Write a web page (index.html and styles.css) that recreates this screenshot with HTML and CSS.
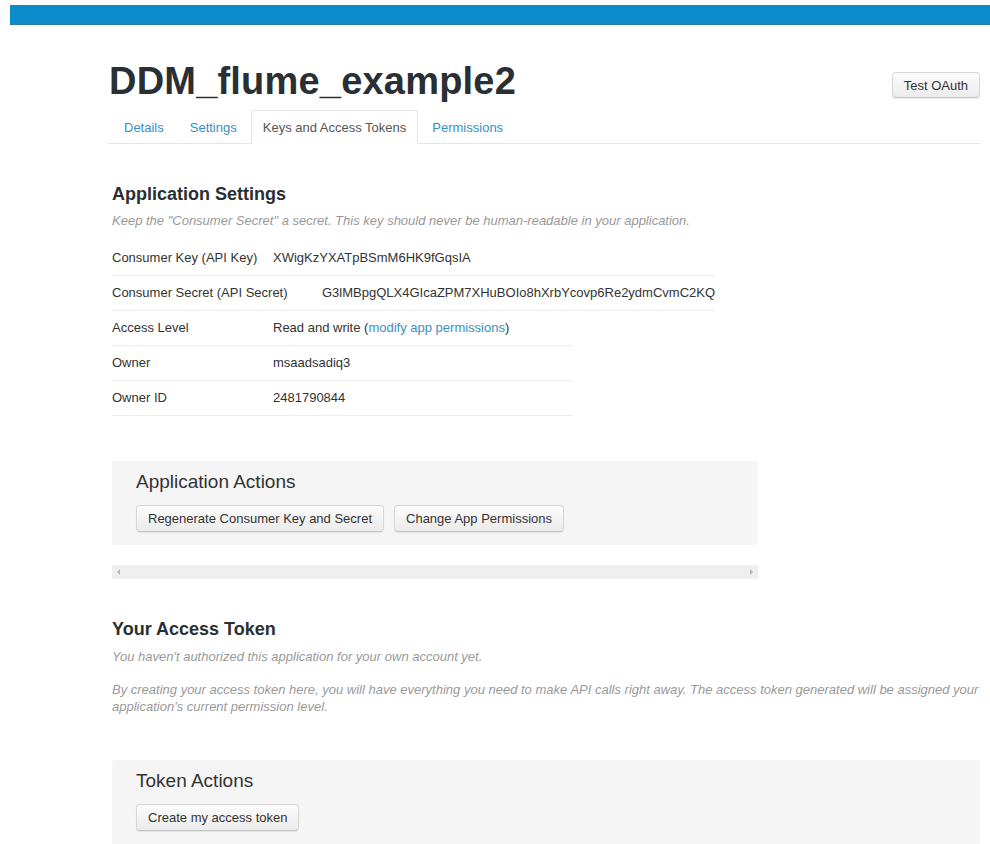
FILE: index.html
```html
<!DOCTYPE html>
<html lang="en">
<head>
<meta charset="utf-8">
<title>DDM_flume_example2 - Keys and Access Tokens</title>
<link rel="stylesheet" href="styles.css">
</head>
<body>
<div class="topbar"></div>
<div class="page">
  <header class="app-header">
    <div class="titlebar">
      <h1 class="app-title">DDM_flume_example2</h1>
      <button class="btn btn-test">Test OAuth</button>
    </div>
    <nav class="tabs">
      <a class="tab" href="#">Details</a>
      <a class="tab" href="#">Settings</a>
      <a class="tab active" href="#">Keys and Access Tokens</a>
      <a class="tab" href="#">Permissions</a>
    </nav>
  </header>

  <main class="content">
    <section class="settings">
      <h2 class="section-title">Application Settings</h2>
      <p class="note">Keep the "Consumer Secret" a secret. This key should never be human-readable in your application.</p>
      <div class="rows">
        <div class="row row-wide">
          <span class="label">Consumer Key (API Key)</span>
          <span class="value">XWigKzYXATpBSmM6HK9fGqsIA</span>
        </div>
        <div class="row row-wide">
          <span class="label label-long">Consumer Secret (API Secret)</span>
          <span class="value">G3lMBpgQLX4GIcaZPM7XHuBOIo8hXrbYcovp6Re2ydmCvmC2KQ</span>
        </div>
        <div class="row">
          <span class="label">Access Level</span>
          <span class="value">Read and write (<a class="link" href="#">modify app permissions</a>)</span>
        </div>
        <div class="row">
          <span class="label">Owner</span>
          <span class="value">msaadsadiq3</span>
        </div>
        <div class="row">
          <span class="label">Owner ID</span>
          <span class="value">2481790844</span>
        </div>
      </div>
    </section>

    <div class="action-box app-actions">
      <h3 class="box-title">Application Actions</h3>
      <div class="btn-row">
        <button class="btn">Regenerate Consumer Key and Secret</button>
        <button class="btn">Change App Permissions</button>
      </div>
    </div>

    <div class="hscroll">
      <span class="arrow arrow-left"></span>
      <span class="arrow arrow-right"></span>
    </div>

    <section class="token">
      <h2 class="section-title">Your Access Token</h2>
      <p class="note">You haven't authorized this application for your own account yet.</p>
      <p class="note para">By creating your access token here, you will have everything you need to make API calls right away. The access token generated will be assigned your application's current permission level.</p>
    </section>

    <div class="action-box token-actions">
      <h3 class="box-title">Token Actions</h3>
      <div class="btn-row">
        <button class="btn">Create my access token</button>
      </div>
    </div>
  </main>
</div>
</body>
</html>
```

FILE: styles.css
```css
* { box-sizing: border-box; }

html, body {
  margin: 0;
  padding: 0;
  background: #fff;
}

body {
  font-family: "Liberation Sans", Arial, sans-serif;
  font-size: 13px;
  color: #333;
  overflow: hidden;
}

.topbar {
  margin: 5px 0 0 10px;
  height: 20px;
  background: #0b8bc9;
  border-bottom: 1px solid #2a7c9e;
}

.page {
  padding: 0 10px 0 108px;
}

/* header */
.titlebar {
  display: flex;
  justify-content: space-between;
  align-items: flex-end;
  margin-top: 34px;
}

.app-title {
  margin: 0;
  padding-left: 1px;
  font-family: "Liberation Sans", Arial, sans-serif;
  font-size: 38px;
  line-height: 44px;
  font-weight: 700;
  color: #292f33;
  letter-spacing: 0.2px;
}

.btn {
  font-family: "Liberation Sans", Arial, sans-serif;
  font-size: 13px;
  color: #333;
  height: 27px;
  padding: 0 11px;
  background: linear-gradient(#fcfcfc, #ebebeb);
  border: 1px solid #d6d6d6;
  border-bottom-color: #c4c4c4;
  border-radius: 4px;
  box-shadow: 0 1px 1px rgba(0, 0, 0, 0.08);
  cursor: pointer;
}

.btn-test {
  height: 26px;
  margin-bottom: 5px;
}

.tabs {
  display: flex;
  gap: 2px;
  margin-top: 7px;
  padding-left: 4px;
  border-bottom: 1px solid #e6e6e6;
}

.tab {
  display: block;
  height: 33px;
  line-height: 33px;
  padding: 0 11px;
  color: #3790c2;
  text-decoration: none;
  border: 1px solid transparent;
  border-bottom: none;
  margin-bottom: -1px;
}

.tab.active {
  color: #555;
  background: #fff;
  border-color: #e6e6e6;
  border-radius: 3px 3px 0 0;
  height: 34px;
}

/* content */
.content {
  padding-left: 4px;
}

.section-title {
  margin: 0;
  font-size: 18px;
  line-height: 22px;
  font-weight: 700;
  color: #292f33;
}

.settings .section-title {
  margin-top: 39px;
}

.note {
  margin: 7px 0 0;
  font-style: italic;
  color: #999;
  line-height: 18px;
}

.token .note {
  line-height: 17px;
  margin-top: 8px;
}

.token .note.para {
  margin-top: 16px;
}

.rows {
  margin-top: 11px;
}

.row {
  display: flex;
  width: 461px;
  height: 35px;
  align-items: center;
  border-bottom: 1px solid #ececec;
  padding-bottom: 1px;
}

.row-wide {
  width: 603px;
}

.label {
  flex: 0 0 161px;
}

.label-long {
  flex-basis: 210px;
}

.link {
  color: #3790c2;
  text-decoration: none;
}

.action-box {
  background: #f5f5f5;
  border-radius: 3px;
  padding: 10px 24px 13px;
}

.app-actions {
  width: 646px;
  margin-top: 45px;
}

.token-actions {
  margin-top: 45px;
  padding-bottom: 20px;
}

.box-title {
  margin: 0 0 12px;
  font-size: 19px;
  line-height: 22px;
  font-weight: 400;
  color: #333;
}

.btn-row {
  display: flex;
  gap: 10px;
}

.hscroll {
  position: relative;
  width: 646px;
  height: 14px;
  margin-top: 20px;
  background: #efefef;
}

.arrow {
  position: absolute;
  top: 4px;
  width: 0;
  height: 0;
  border-top: 3px solid transparent;
  border-bottom: 3px solid transparent;
}

.arrow-left {
  left: 5px;
  border-right: 3px solid #b5b5b5;
}

.arrow-right {
  right: 5px;
  border-left: 3px solid #b5b5b5;
}

.token .section-title {
  margin-top: 39px;
}
```
